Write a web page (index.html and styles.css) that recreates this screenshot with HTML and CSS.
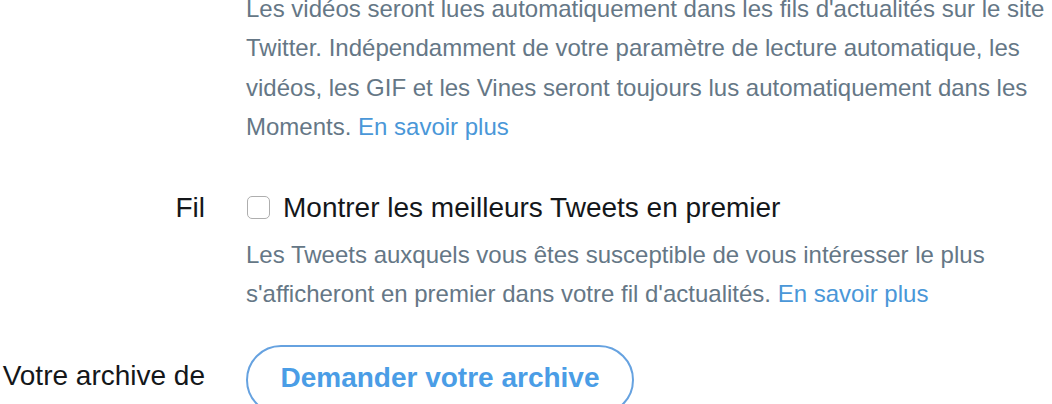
FILE: index.html
```html
<!DOCTYPE html>
<html lang="fr">
<head>
<meta charset="utf-8">
<link rel="stylesheet" href="styles.css">
</head>
<body>
<div class="settings">
  <div class="row row-first">
    <div class="label"></div>
    <div class="content">
      <p class="desc">Les vidéos seront lues automatiquement dans les fils d'actualités sur le site Twitter. Indépendamment de votre paramètre de lecture automatique, les vidéos, les GIF et les Vines seront toujours lus automatiquement dans les Moments. <a class="link" href="#">En savoir plus</a></p>
    </div>
  </div>
  <div class="row row-fil">
    <div class="label">Fil</div>
    <div class="content">
      <label class="check"><span class="box"></span><span class="check-text">Montrer les meilleurs Tweets en premier</span></label>
      <p class="desc">Les Tweets auxquels vous êtes susceptible de vous intéresser le plus s'afficheront en premier dans votre fil d'actualités. <a class="link" href="#">En savoir plus</a></p>
    </div>
  </div>
  <div class="row row-archive">
    <div class="label">Votre archive de</div>
    <div class="content">
      <button class="btn">Demander votre archive</button>
    </div>
  </div>
</div>
</body>
</html>
```
FILE: styles.css
```css
html, body {
  margin: 0;
  padding: 0;
  background: #ffffff;
}
body {
  font-family: "Liberation Sans", Arial, sans-serif;
  overflow: hidden;
  height: 404px;
}
.settings {
  margin-top: -11px;
}
.row {
  display: grid;
  grid-template-columns: 205px 1fr;
  column-gap: 41px;
}
.label {
  text-align: right;
  color: #14171a;
  font-size: 28px;
  line-height: 32px;
  white-space: nowrap;
}
.content {
  min-width: 0;
}
.desc {
  margin: 0;
  color: #657786;
  font-size: 24px;
  line-height: 39.4px;
}
.link {
  color: #4a97d8;
  text-decoration: none;
}
.row-fil {
  margin-top: 45px;
}
.check {
  display: flex;
  align-items: center;
  height: 32px;
}
.box {
  width: 21px;
  height: 21px;
  margin-left: 1px;
  margin-right: 13px;
  border: 1px solid #aeaeae;
  border-radius: 5px;
  background: #fff;
  flex: none;
}
.check-text {
  color: #14171a;
  font-size: 28px;
}
.row-fil .desc {
  margin-top: 11px;
}
.row-archive {
  margin-top: 32px;
}
.row-archive .label {
  padding-top: 15px;
}
.btn {
  width: 388px;
  height: 70px;
  border: 2px solid #66a2e0;
  border-radius: 35px;
  background: #fff;
  color: #4a9de6;
  font-family: "Liberation Sans", Arial, sans-serif;
  font-weight: bold;
  font-size: 28px;
  padding: 0 0 4px;
  text-align: center;
}
```
